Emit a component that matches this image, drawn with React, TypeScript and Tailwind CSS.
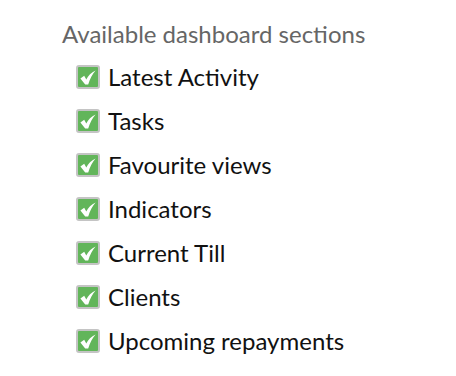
import React from "react";

const items = [
  "Latest Activity",
  "Tasks",
  "Favourite views",
  "Indicators",
  "Current Till",
  "Clients",
  "Upcoming repayments",
];

function Check() {
  return (
    <span className="flex h-[24px] w-[24px] shrink-0 items-center justify-center rounded-[3px] border-2 border-[#c4c4c4] bg-[#62b55a]">
      <svg width="16" height="15" viewBox="0 0 16 15">
        <path
          d="M0.4 8.4 L4.2 5.8 L6.3 9.4 C8.2 5.6 11.2 2.4 15.6 0.4 C12.6 3.8 10 8.6 8.2 14.4 L5.2 14.4 Z"
          fill="#fff"
        />
      </svg>
    </span>
  );
}

export default function App() {
  return (
    <div
      className="h-[376px] w-[456px] bg-white pl-[62px] pt-[20px]"
      style={{ fontFamily: "Lato, 'Noto Sans', sans-serif" }}
    >
      <div className="text-[24px] leading-[28px] text-[#666]">Available dashboard sections</div>
      <ul className="mt-[17px] flex flex-col gap-[20px] pl-[14px]">
        {items.map((t) => (
          <li key={t} className="flex h-[24px] items-center gap-[8px]">
            <Check />
            <span className="text-[24px] leading-[24px] text-[#111]">{t}</span>
          </li>
        ))}
      </ul>
    </div>
  );
}
